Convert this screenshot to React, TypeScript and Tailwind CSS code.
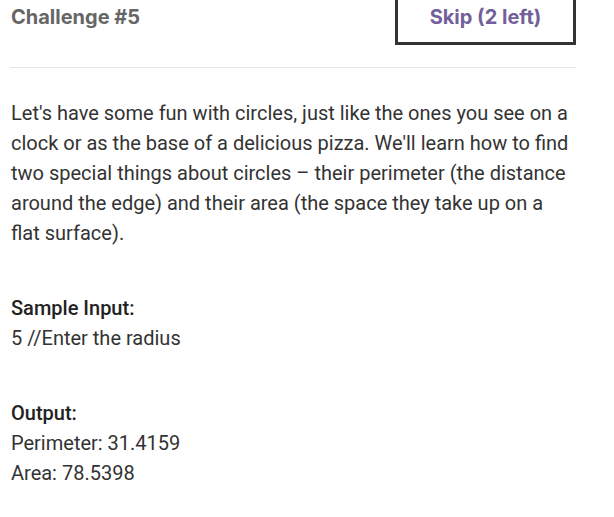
import * as React from 'react';

const App: React.FC = () => {
  return (
    <div className="w-[614px] h-[517px] bg-white overflow-hidden">
      <div className="ml-[10px] w-[566px]">
        <div className="-mt-[11px] flex items-center justify-between">
          <h1 className="text-[20px] font-bold text-[#666666] pl-[1px] font-['Inter',sans-serif]">Challenge #5</h1>
          <button className="h-[56px] w-[181px] border-[3px] border-[#333333] bg-white text-[20px] font-bold text-[#73609a] font-['Inter',sans-serif]">
            Skip (2 left)
          </button>
        </div>
        <div className="mt-[22px] border-t border-[#e5e5e5]" />
        <div className="pl-[1px] text-[20px] leading-[30px] font-normal text-[#333333] font-['Roboto',sans-serif]">
          <p className="mt-[30px]">
            Let's have some fun with circles, just like the ones you see on a clock or as the base of a delicious
            pizza. We'll learn how to find two special things about circles – their perimeter (the distance around
            the edge) and their area (the space they take up on a flat surface).
          </p>
          <div className="mt-[45px]">
            <p className="font-medium text-[#222222]">Sample Input:</p>
            <p>5 //Enter the radius</p>
          </div>
          <div className="mt-[45px]">
            <p className="font-medium text-[#222222]">Output:</p>
            <p>Perimeter: 31.4159</p>
            <p>Area: 78.5398</p>
          </div>
        </div>
      </div>
    </div>
  );
};

export default App;
